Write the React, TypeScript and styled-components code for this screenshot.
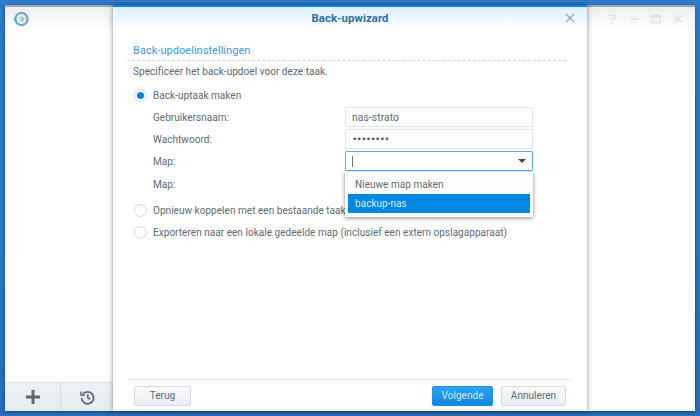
import React from "react";
import styled, { createGlobalStyle } from "styled-components";

const Global = createGlobalStyle`
  html, body { margin: 0; padding: 0; width: 700px; height: 416px; overflow: hidden; }
  #root { width: 700px; height: 416px; }
  * { box-sizing: border-box; }
`;

const Desktop = styled.div`
  width: 700px; height: 416px; padding: 5px;
  background: linear-gradient(180deg, #2c7cca 0%, #2a78c6 60%, #2670b8 100%);
  font-family: "Roboto", "Liberation Sans", sans-serif;
  font-size: 10px; letter-spacing: .04px; color: #5f6972; position: relative;
`;
const AppWindow = styled.div`
  width: 100%; height: 100%; background: #fff; border-top: 2px solid #9da3a9;
  display: flex; flex-direction: column; position: relative;
  box-shadow: 0 1px 3px rgba(0,30,70,.6);
`;
const AppHeader = styled.div`
  height: 24px; display: flex; align-items: center; justify-content: space-between;
  padding: 0 12px 1px 8px;
  background: linear-gradient(180deg, #eceef1 0%, #ffffff 100%);
`;
const WinControls = styled.div`display: flex; gap: 12px; align-items: center;`;
const AppBody = styled.div`flex: 1;`;
const AppDock = styled.div`
  height: 29px; display: flex; width: 108px;
  background: linear-gradient(180deg, #eef2f6, #e6ebf0);
  border-top: 1px solid #dde2e7;
`;
const DockButton = styled.div<{ $divider?: boolean }>`
  width: ${p => (p.$divider ? 56 : 52)}px; flex: none; display: flex; align-items: center; justify-content: center;
  border-right: ${p => (p.$divider ? "1px solid #d8dde2" : "none")};
`;
const Modal = styled.div`
  position: absolute; left: 108px; top: -2px; width: 474px; height: 406px;
  background: #fff; border-top: 2px solid #0086e5;
  display: flex; flex-direction: column;
  box-shadow: 0 0 5px rgba(0,0,0,.45);
`;
const ModalHeader = styled.div`
  height: 24px; flex: none; display: flex; align-items: center; justify-content: center;
  padding-bottom: 2px; position: relative;
  background: linear-gradient(180deg, #dff0fd 0%, #ffffff 100%);
`;
const ModalTitle = styled.div`font-weight: 700; font-size: 11.4px; color: #2e6ea6;`;
const CloseBtn = styled.div`position: absolute; right: 12px; top: 6px; width: 10px; height: 10px; display: flex;`;
const ModalContent = styled.div`flex: 1; padding: 11px 21px 0 20px; display: flex; flex-direction: column;`;
const SectionTitle = styled.div`
  font-size: 11px; color: #3a9be8; height: 19px; line-height: 17px; margin-left: -6px; padding-left: 6px;
  border-bottom: 1px dashed #d5d9dd;
`;
const Intro = styled.div`height: 23px; line-height: 22px;`;
const RadioRow = styled.div<{ $h: number }>`
  display: flex; align-items: center; gap: 6px; height: ${p => p.$h}px; white-space: nowrap;
`;
const Radio = styled.div<{ $on?: boolean }>`
  width: 13px; height: 13px; border-radius: 50%; background: #fff; border: 1px solid #d3d9df; flex: none;
  display: flex; align-items: center; justify-content: center; margin-left: 1px;
  &::after { content: ""; width: 7px; height: 7px; border-radius: 50%; background: ${p => (p.$on ? "#0086e5" : "transparent")}; }
`;
const FieldRow = styled.div<{ $tall?: boolean }>`
  display: flex; align-items: center; height: ${p => (p.$tall ? 24 : 22)}px; padding-left: 20px;
`;
const FieldLabel = styled.div`width: 192px; flex: none;`;
const Field = styled.div<{ $focus?: boolean }>`
  width: 188px; height: 20px; border: 1px solid ${p => (p.$focus ? "#5badec" : "#e2e6ea")};
  border-radius: 1px; padding: 0 6px; display: flex; align-items: center; justify-content: space-between;
  background: #fff; font-size: 10.4px;
`;
const Caret = styled.span`width: 1px; height: 11px; background: #6a727a;`;
const Arrow = styled.span`width: 0; height: 0; border-left: 4px solid transparent; border-right: 4px solid transparent; border-top: 4px solid #3f4a55;`;
const Dots = styled.span`font-size: 9px; font-family: "DejaVu Sans", sans-serif; line-height: 1; color: #4a535c; letter-spacing: -.7px;`;
const Dropdown = styled.div`
  position: absolute; left: 232px; top: 165px; width: 188px; height: 45px;
  background: #fff; padding: 3px 3px 4px 3px; box-shadow: 0 1px 4px rgba(0,0,0,.5);
  display: flex; flex-direction: column; z-index: 2;
`;
const Option = styled.div<{ $sel?: boolean }>`
  height: 19px; flex: none; padding-left: 7px; display: flex; align-items: center; font-size: 10px;
  background: ${p => (p.$sel ? "#0086e5" : "transparent")};
  color: ${p => (p.$sel ? "#dceefc" : "#5f6972")};
`;
const ModalFooter = styled.div`
  margin: 0 14px; padding: 0 7px 0 7px; height: 32px; flex: none; border-top: 1px solid #e8eaec;
  display: flex; align-items: center; justify-content: space-between;
`;
const FooterGroup = styled.div`display: flex; gap: 8px;`;
const Btn = styled.div<{ $primary?: boolean; $w: number }>`
  height: 20px; width: ${p => p.$w}px; border-radius: 2px; display: flex; align-items: center; justify-content: center;
  font-size: 10px;
  border: 1px solid ${p => (p.$primary ? "#1a8fe6" : "#d3dbe2")};
  color: ${p => (p.$primary ? "#d5eafb" : "#5f6972")};
  background: ${p => (p.$primary ? "linear-gradient(180deg,#2ba3f3,#0f86e3)" : "linear-gradient(180deg,#f6f8fa,#edf0f3)")};
`;

export default function App() {
  return (
    <>
      <Global />
      <Desktop>
        <AppWindow>
          <AppHeader>
            <svg width="16" height="16" viewBox="0 0 16 16">
              <path d="M2 5.5L0.2 8 2 10.5z" fill="#7fb0cd" />
              <circle cx="8.5" cy="8" r="7.2" fill="#6ea6c8" />
              <circle cx="8.5" cy="8" r="5" fill="#e4f1f8" />
              <circle cx="8.5" cy="8" r="2.8" fill="#a9cbe0" />
              <rect x="8.4" y="7" width="1.6" height="2" fill="#d98a4a" />
              <rect x="6.8" y="7" width="1.6" height="2" fill="#eef2f4" />
            </svg>
            <WinControls>
              <svg width="10" height="10" viewBox="0 0 10 10" fill="none" stroke="#e0e3e6" strokeWidth="1.4"><path d="M1 1.5h7v3.5H4.5v1.5M4.5 8v1.5" /></svg>
              <svg width="10" height="10" viewBox="0 0 10 10" stroke="#e0e3e6" strokeWidth="1.6"><path d="M1 5h8" /></svg>
              <svg width="10" height="10" viewBox="0 0 10 10" fill="none" stroke="#e0e3e6" strokeWidth="1.2"><rect x="1" y="1.5" width="8" height="7" /><path d="M1 3h8" strokeWidth="1.6" /></svg>
              <svg width="10" height="10" viewBox="0 0 10 10" stroke="#e0e3e6" strokeWidth="1.3"><path d="M1 1l8 8M9 1l-8 8" /></svg>
            </WinControls>
          </AppHeader>
          <AppBody />
          <AppDock>
            <DockButton $divider>
              <svg width="14" height="14" viewBox="0 0 14 14" stroke="#5d6a76" strokeWidth="3"><path d="M7 0v14M0 7h14" /></svg>
            </DockButton>
            <DockButton>
              <svg width="15" height="15" viewBox="0 0 15 15" fill="none" stroke="#5d6a76" strokeWidth="1.8"><path d="M2.6 4.5A6 6 0 1 1 1.6 8" /><path d="M1 1.6v3.8h3.8" strokeWidth="1.4" /><path d="M7.8 4.2v3.6l2.4 1.4" /></svg>
            </DockButton>
          </AppDock>
          <Modal>
            <ModalHeader>
              <ModalTitle>Back-upwizard</ModalTitle>
              <CloseBtn>
                <svg width="10" height="10" viewBox="0 0 10 10" stroke="#98a2ab" strokeWidth="1.3"><path d="M1 1l8 8M9 1l-8 8" /></svg>
              </CloseBtn>
            </ModalHeader>
            <ModalContent>
              <SectionTitle>Back-updoelinstellingen</SectionTitle>
              <Intro>Specificeer het back-updoel voor deze taak.</Intro>
              <RadioRow $h={22}><Radio $on />Back-uptaak maken</RadioRow>
              <FieldRow><FieldLabel>Gebruikersnaam:</FieldLabel><Field>nas-strato</Field></FieldRow>
              <FieldRow><FieldLabel>Wachtwoord:</FieldLabel><Field><Dots>••••••••</Dots></Field></FieldRow>
              <FieldRow><FieldLabel>Map:</FieldLabel><Field $focus><Caret /><Arrow /></Field></FieldRow>
              <FieldRow $tall><FieldLabel>Map:</FieldLabel></FieldRow>
              <RadioRow $h={28}><Radio />Opnieuw koppelen met een bestaande taak</RadioRow>
              <RadioRow $h={16}><Radio />Exporteren naar een lokale gedeelde map (inclusief een extern opslagapparaat)</RadioRow>
            </ModalContent>
            <Dropdown>
              <Option>Nieuwe map maken</Option>
              <Option $sel>backup-nas</Option>
            </Dropdown>
            <ModalFooter>
              <Btn $w={57}>Terug</Btn>
              <FooterGroup>
                <Btn $primary $w={61}>Volgende</Btn>
                <Btn $w={65}>Annuleren</Btn>
              </FooterGroup>
            </ModalFooter>
          </Modal>
        </AppWindow>
      </Desktop>
    </>
  );
}
